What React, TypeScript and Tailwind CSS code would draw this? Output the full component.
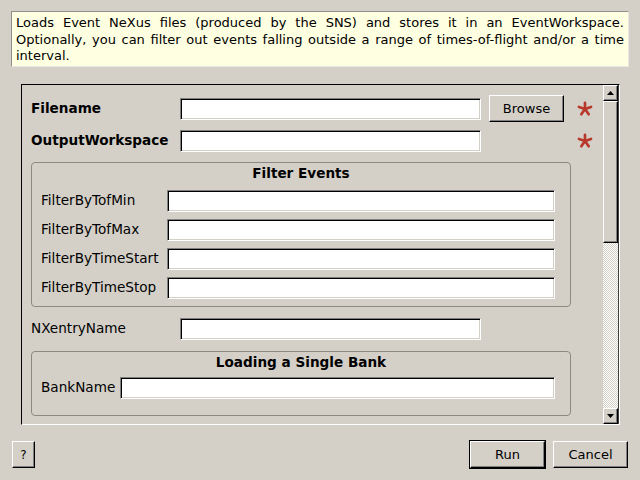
import React from "react";

const raised =
  "border border-t-white border-l-white border-r-black border-b-black shadow-[inset_-1px_-1px_0_#808080] bg-[#d4d0c8]";
const sunken =
  "border border-t-[#808080] border-l-[#808080] border-r-white border-b-white shadow-[inset_1px_1px_0_#000000,inset_-1px_-1px_0_#d4d0c8] bg-white";

function Star() {
  return (
    <svg width="16" height="16" viewBox="0 0 16 16" className="shrink-0">
      <g stroke="#b8392c" strokeWidth="2.7" strokeLinecap="round">
        <line x1="8" y1="8" x2="8" y2="1.8" />
        <line x1="8" y1="8" x2="14" y2="6" />
        <line x1="8" y1="8" x2="11.7" y2="13.2" />
        <line x1="8" y1="8" x2="4.3" y2="13.2" />
        <line x1="8" y1="8" x2="2" y2="6" />
      </g>
    </svg>
  );
}

function Input({ className }: { className: string }) {
  return <div className={`${sunken} h-[22px] ${className}`} />;
}

function GroupRow({ label }: { label: string }) {
  return (
    <div className="flex h-[29px] items-center">
      <div className="w-[126px] shrink-0 text-[13.6px]">{label}</div>
      <Input className="w-[388px]" />
    </div>
  );
}

function Group({ title, children }: { title: string; children: React.ReactNode }) {
  return (
    <div className="w-[540px] rounded-[4px] border border-[#8c8982] px-[9px]">
      <div className="flex h-[21px] items-center justify-center text-[13.6px] font-bold">{title}</div>
      {children}
    </div>
  );
}

function Arrow({ up }: { up?: boolean }) {
  return (
    <div className={`${raised} flex h-[16px] w-[15px] items-center justify-center`}>
      <svg width="7" height="4" viewBox="0 0 7 4">
        <polygon points={up ? "3.5,0 7,4 0,4" : "0,0 7,0 3.5,4"} fill="#000" />
      </svg>
    </div>
  );
}

export default function App() {
  return (
    <div className="relative h-[480px] w-[640px] overflow-hidden bg-[#d4d0c8] font-['DejaVu_Sans',sans-serif] text-[13px] text-black">
      <div className="pl-[11px] pt-[11px]">
        <div className="h-[56px] w-[618px] border border-t-[#8f8f8f] border-l-[#8f8f8f] border-r-[#e8e8e0] border-b-[#e8e8e0] bg-[#ffffe1] px-[4px] pt-[3px] text-justify leading-[16.5px]">
          Loads Event NeXus files (produced by the SNS) and stores it in an EventWorkspace.
          Optionally, you can filter out events falling outside a range of times-of-flight and/or a time
          interval.
        </div>
      </div>

      <div className="ml-[21px] mt-[17px] flex h-[341px] w-[599px] border border-t-black border-l-black border-r-white border-b-white">
        <div className="w-[581px] overflow-hidden pl-[9px] pt-[10px]">
          <div className="flex h-[27px] items-center">
            <div className="w-[149px] shrink-0 text-[13.6px] font-bold">Filename</div>
            <Input className="w-[301px]" />
            <div className={`${raised} ml-[8px] flex h-[27px] w-[75px] items-center justify-center`}>Browse</div>
            <div className="ml-[13px]">
              <Star />
            </div>
          </div>
          <div className="mt-[5px] flex h-[27px] items-center">
            <div className="w-[149px] shrink-0 text-[13.6px] font-bold">OutputWorkspace</div>
            <Input className="w-[301px]" />
            <div className="ml-[96px]">
              <Star />
            </div>
          </div>

          <div className="mt-[8px]">
            <Group title="Filter Events">
              <div className="mt-[2px] pb-[4px]">
                <GroupRow label="FilterByTofMin" />
                <GroupRow label="FilterByTofMax" />
                <GroupRow label="FilterByTimeStart" />
                <GroupRow label="FilterByTimeStop" />
              </div>
            </Group>
          </div>

          <div className="mt-[8px] flex h-[27px] items-center">
            <div className="w-[149px] shrink-0 text-[13.6px]">NXentryName</div>
            <Input className="w-[301px]" />
          </div>

          <div className="mt-[9px]">
            <Group title="Loading a Single Bank">
              <div className="pb-[13px]">
                <div className="flex h-[29px] items-center">
                  <div className="w-[79px] shrink-0 text-[13.6px]">BankName</div>
                  <Input className="w-[435px]" />
                </div>
              </div>
            </Group>
          </div>
        </div>

        <div className="flex w-[16px] flex-col border-r border-[#404040]">
          <Arrow up />
          <div className={`${raised} h-[142px] w-[15px]`} />
          <div className="w-[15px] flex-1 bg-[repeating-conic-gradient(#ffffff_0%_25%,#d4d0c8_0%_50%)] bg-[length:2px_2px]" />
          <Arrow />
        </div>
      </div>

      <div className="mt-[15px] flex h-[29px] items-center px-[12px]">
        <div className={`${raised} flex h-[27px] w-[23px] items-center justify-center text-[12px]`}>?</div>
        <div className="flex-1" />
        <div className="h-[29px] w-[77px] border border-black">
          <div className={`${raised} flex h-full w-full items-center justify-center`}>Run</div>
        </div>
        <div className={`${raised} ml-[7px] flex h-[27px] w-[75px] items-center justify-center`}>Cancel</div>
      </div>
    </div>
  );
}
